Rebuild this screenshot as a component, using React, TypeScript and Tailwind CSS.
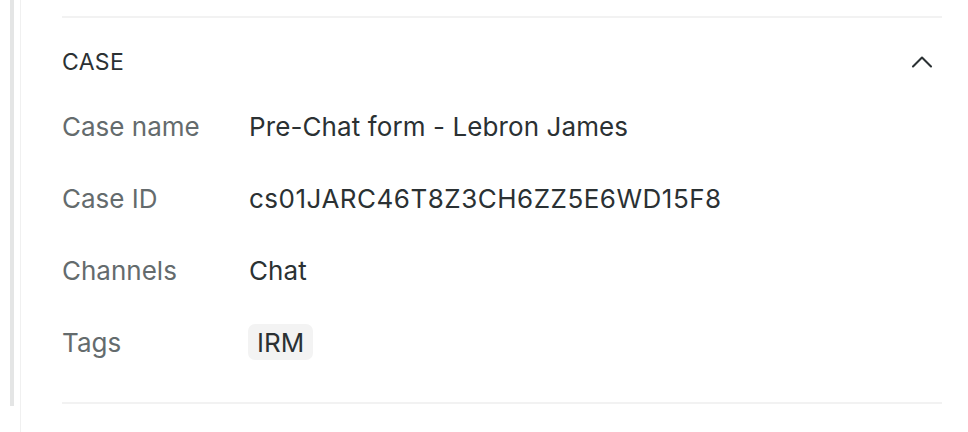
import { ChevronUp } from "lucide-react";

const rows: { label: string; value: string; tag?: boolean; wide?: boolean }[] = [
  { label: "Case name", value: "Pre-Chat form - Lebron James" },
  { label: "Case ID", value: "cs01JARC46T8Z3CH6ZZ5E6WD15F8", wide: true },
  { label: "Channels", value: "Chat" },
  { label: "Tags", value: "IRM", tag: true },
];

export default function App() {
  return (
    <div className="flex h-[432px] w-full bg-white font-['Inter',sans-serif] overflow-hidden">
      <div className="ml-[10px] h-[406px] w-[4px] bg-[#e4e5e5]" />
      <div className="ml-[6px] h-full w-px bg-[#f0f0f0]" />
      <div className="flex-1 pl-[41px] pr-[26px]">
        <div className="mt-[16px] h-[2px] bg-[#f2f2f2]" />
        <div className="flex h-[32px] items-center justify-between mt-[28px] mb-[12px]">
          <span className="text-[23px] text-[#2b3133] tracking-[0.3px]">CASE</span>
          <ChevronUp size={36} strokeWidth={1.4} className="mr-[2px] text-[#2b3133]" />
        </div>
        {rows.map((r) => (
          <div key={r.label} className="flex h-[72px] items-center">
            <span className="w-[187px] text-[26px] text-[#646b6d]">{r.label}</span>
            {r.tag ? (
              <span className="-ml-px rounded-[7px] bg-[#f3f3f3] px-[9px] h-[36px] flex items-center text-[26px] text-[#2b3133]">
                {r.value}
              </span>
            ) : (
              <span
                className={
                  r.wide
                    ? "text-[26px] text-[#2b3133] tracking-[0.5px]"
                    : "text-[26px] text-[#2b3133] tracking-[0.1px]"
                }
              >
                {r.value}
              </span>
            )}
          </div>
        ))}
        <div className="mt-[24px] h-[2px] bg-[#f2f2f2]" />
      </div>
    </div>
  );
}
